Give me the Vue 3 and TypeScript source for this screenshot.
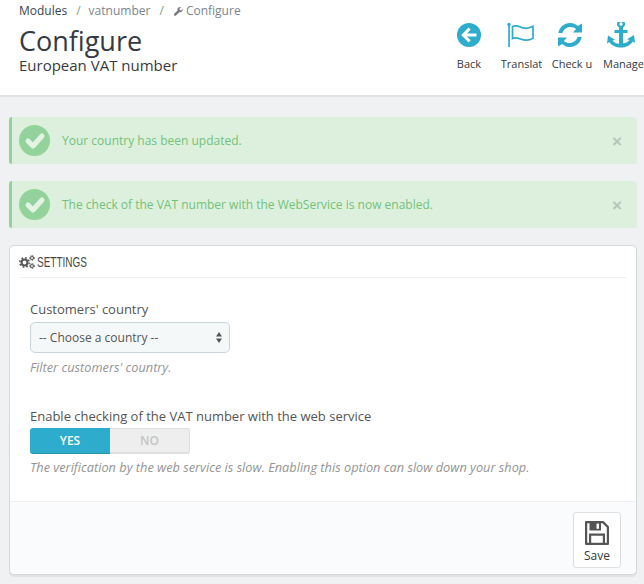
<script setup lang="ts">
const alerts: string[] = [
  'Your country has been updated.',
  'The check of the VAT number with the WebService is now enabled.',
]
</script>

<template>
  <div class="page">
    <header class="head">
      <div class="head-left">
        <nav class="crumbs">
          <span class="crumb-first">Modules</span>
          <span class="sep">/</span>
          <span>vatnumber</span>
          <span class="sep">/</span>
          <span class="crumb-last">
            <svg class="wrench" viewBox="0 0 16 16" width="9" height="9">
              <path fill="#777" d="M15.6 3.6 12.9 6.3 10.2 5.8 9.7 3.1 12.4.4C10.7-.2 8.7.2 7.4 1.5 6.1 2.8 5.8 4.7 6.4 6.3L.6 12.1C-.2 12.9-.2 14.2.6 15c.8.8 2.1.8 2.9 0L9.3 9.2c1.6.6 3.5.3 4.8-1 1.3-1.3 1.7-3 1.5-4.6Z" />
            </svg>
            Configure
          </span>
        </nav>
        <h1 class="title">Configure</h1>
        <div class="subtitle">European VAT number</div>
      </div>
      <div class="tools">
        <div class="tool tool-back">
          <svg viewBox="0 0 24 24" width="24" height="24">
            <circle cx="12" cy="12" r="12" fill="#2eacce" />
            <path fill="#fff" d="M11.6 4.6 4.2 12l7.4 7.4 2.1-2.1-3.8-3.800h9.600v-3h-9.600l3.800-3.800Z" />
          </svg>
          <span class="tool-label">Back</span>
        </div>
        <div class="tool tool-flag">
          <svg viewBox="0 0 28 26" width="28" height="26">
            <circle cx="2" cy="2.500" r="1.700" fill="#2eacce" />
            <rect x="1.200" y="3" width="1.700" height="22" fill="#2eacce" />
            <path fill="none" stroke="#2eacce" stroke-width="1.700" d="M5.500 4.500c3-1.400 5.500-.6 8 .6 3.500 1.600 8 1.600 12.500-.8v11.900c-3.500 2.200-8.500 2.400-12.500.8-3.500-1.400-5.500-1.800-8-.6Z" />
          </svg>
          <span class="tool-label">Translat</span>
        </div>
        <div class="tool tool-check">
          <svg viewBox="0 0 24 24" width="24" height="24">
            <path fill="#2eacce" d="M12 0c3.100 0 5.700 1.100 7.800 3.100L24 .5v9h-9l3.100-3.400C16.700 4.800 14.500 4 12.500 4 8.700 4 5.500 6.500 4.500 10H.3C1.400 4.300 6.200 0 12 0Z" />
            <path fill="#2eacce" d="M12 24c-3.100 0-5.700-1.100-7.800-3.100L0 23.500v-9h9l-3.100 3.400C7.300 19.200 9.500 20 11.500 20c3.800 0 7-2.500 8-6h4.200C22.600 19.700 17.800 24 12 24Z" />
          </svg>
          <span class="tool-label">Check u</span>
        </div>
        <div class="tool tool-anchor">
          <svg viewBox="0 0 28 28" width="28" height="28">
            <path fill="#2eacce" fill-rule="evenodd" d="M14 .5a4 4 0 0 1 2 7.500v2.500h4.500v3H16v10.300c3-.3 5.300-1.500 6.500-3.300l-2.500-.8 7-4.200 1 8-2.200-1.600C23.500 25.500 19 28 14 28S4.500 25.500 2.200 22.400L0 24l1-8 7 4.200-2.500.8c1.200 1.800 3.500 3 6.500 3.300V13.500H7.500v-3H12V8A4 4 0 0 1 14 .5Zm0 2.300a1.700 1.700 0 1 0 0 3.400 1.700 1.700 0 0 0 0-3.400Z" />
          </svg>
          <span class="tool-label">Manage</span>
        </div>
      </div>
    </header>

    <main class="content">
      <div v-for="a in alerts" :key="a" class="alert">
        <svg class="alert-icon" viewBox="0 0 31 31" width="31" height="31">
          <circle cx="15.500" cy="15.500" r="15.500" fill="#93d29a" />
          <path fill="none" stroke="#e3f3e4" stroke-width="5" stroke-linecap="round" stroke-linejoin="round" d="M9 16l5 5 9-10" />
        </svg>
        <span class="alert-text">{{ a }}</span>
        <span class="alert-close">×</span>
      </div>

      <section class="panel">
        <div class="panel-head">
          <svg viewBox="0 0 16 14" width="16" height="14">
            <g fill="none" stroke="#555">
              <circle cx="5.500" cy="7.500" r="2.900" stroke-width="2" />
              <circle cx="5.500" cy="7.500" r="4.700" stroke-width="1.500" stroke-dasharray="1.800 1.890" />
              <circle cx="13" cy="3" r="1.500" stroke-width="1" />
              <circle cx="13" cy="3" r="2.400" stroke-width="1" stroke-dasharray="1.200 .9" />
              <circle cx="13" cy="11" r="1.500" stroke-width="1" />
              <circle cx="13" cy="11" r="2.400" stroke-width="1" stroke-dasharray="1.200 .9" />
            </g>
          </svg>
          <span class="panel-title">SETTINGS</span>
        </div>

        <div class="panel-body">
          <div class="field field-country">
            <label class="label">Customers' country</label>
            <div class="select">
              <span>-- Choose a country --</span>
              <svg viewBox="0 0 6 11" width="6" height="11">
                <path fill="#555" d="M3 0l3 4.400H0ZM3 11l3-4.400H0Z" />
              </svg>
            </div>
            <p class="help">Filter customers' country.</p>
          </div>

          <div class="field">
            <label class="label">Enable checking of the VAT number with the web service</label>
            <div class="switch">
              <span class="sw-yes">YES</span>
              <span class="sw-no">NO</span>
            </div>
            <p class="help help-tight">The verification by the web service is slow. Enabling this option can slow down your shop.</p>
          </div>
        </div>

        <div class="panel-foot">
          <button class="save" type="button">
            <svg viewBox="0 0 24 24" width="24" height="24">
              <path fill="none" stroke="#555" stroke-width="2.200" stroke-linejoin="round" d="M1.100 1.100H18L22.900 6V22.900H1.100Z" />
              <path fill="#555" fill-rule="evenodd" d="M4.500 1h11.500v8.500H4.500ZM11.500 2.500v5.200h2.500V2.500Z" />
              <path fill="none" stroke="#555" stroke-width="2.200" d="M5.100 23V13.600H18.900V23" />
            </svg>
            <span>Save</span>
          </button>
        </div>
      </section>
    </main>
  </div>
</template>

<style>
html, body { margin: 0; padding: 0; background: #eff1f3; }
</style>

<style scoped>
.page {
  width: 644px;
  height: 584px;
  overflow: hidden;
  background: #eff1f3;
  font-family: "Open Sans", "Noto Sans", sans-serif;
  font-size: 12px;
  color: #555;
}
.head {
  box-sizing: border-box;
  height: 97px;
  background: #fff;
  border-bottom: 2px solid #e0e1e3;
  display: flex;
  justify-content: space-between;
}
.head-left { padding: 2px 0 0 19px; }
.crumbs {
  display: flex;
  align-items: center;
  height: 16px;
  font-size: 12px;
  color: #7b8691;
}
.crumb-first { color: #3c4650; }
.sep { margin: 0 8px 0 9px; color: #7c9a8a; }
.crumb-last { margin-left: 2px; }
.wrench { margin-right: 0; vertical-align: -1px; }
.title {
  margin: 7px 0 0;
  font-size: 27px;
  line-height: 32px;
  font-weight: 400;
  color: #363a41;
}
.subtitle {
  font-size: 15px;
  line-height: 18px;
  color: #363a41;
  margin-top: -1px;
}
.tools {
  display: flex;
  padding: 22px 0 0 0;
}
.tool {
  display: flex;
  flex-direction: column;
  align-items: center;
  overflow: hidden;
  height: 50px;
}
.tool svg { flex: none; height: 26px; }
.tool-label {
  font-size: 11px;
  line-height: 15px;
  margin-top: 8px;
  color: #363a41;
  white-space: nowrap;
}
.tool-back { width: 42px; margin-left: -1px; }
.tool-flag { width: 41px; margin-left: 11px; }
.tool-flag svg { margin-right: 1px; }
.tool-check { width: 40px; margin-left: 10px; }
.tool-check svg { margin-right: 4px; }
.tool-anchor { width: 41px; margin-left: 11px; }
.tool-anchor svg { margin-top: -3px; margin-right: 6px; height: 29px; }
.content { padding: 20px 7px 0 9px; }
.alert {
  box-sizing: border-box;
  height: 47px;
  margin-bottom: 17px;
  display: flex;
  align-items: center;
  background: #ddf0de;
  border-left: 3px solid #93d29a;
  border-radius: 3px;
  padding: 0 15px 0 7px;
  color: #72c279;
  font-size: 12px;
}
.alert-text { margin-left: 12px; flex: 1; }
.alert-close {
  margin-top: 2px;
  font-size: 17px;
  font-weight: 700;
  color: #b4c6b7;
  line-height: 18px;
  font-family: "Liberation Sans", sans-serif;
}
.panel {
  box-sizing: border-box;
  height: 330px;
  background: #fff;
  border: 1px solid #d3d8db;
  border-radius: 5px;
  box-shadow: 0 2px 0 rgba(0, 0, 0, 0.06);
  display: flex;
  flex-direction: column;
}
.panel-head {
  height: 31px;
  margin: 0 10px 0 9px;
  border-bottom: 1px solid #eeeff0;
  display: flex;
  align-items: center;
  gap: 2px;
  flex: none;
}
.panel-title {
  display: inline-block;
  font-family: "Liberation Sans", sans-serif;
  font-size: 14.500px;
  color: #4a4a4a;
  transform: scaleX(0.69);
  transform-origin: left center;
}
.panel-body { flex: 1; padding: 22px 20px 0 20px; }
.label {
  display: block;
  font-size: 13px;
  line-height: 18px;
  color: #555;
}
.field-country { margin-bottom: 31px; }
.select {
  box-sizing: border-box;
  margin-top: 4px;
  width: 200px;
  height: 31px;
  background: #f5f8f9;
  border: 1px solid #c7d6db;
  border-radius: 5px;
  padding: 0 7px 0 8px;
  display: flex;
  align-items: center;
  justify-content: space-between;
  font-size: 12px;
  color: #555;
}
.help {
  margin: 6px 0 0;
  font-size: 12.750px;
  line-height: 17px;
  font-style: italic;
  color: #959595;
}
.help-tight { margin-top: 5px; }
.switch {
  margin-top: 3px;
  width: 160px;
  height: 26px;
  display: flex;
  font-size: 12px;
  font-weight: 600;
}
.sw-yes, .sw-no {
  width: 80px;
  display: flex;
  align-items: center;
  justify-content: center;
  box-sizing: border-box;
}
.sw-yes {
  background: #2eacce;
  color: #fff;
  border-radius: 3px 0 0 3px;
  border-bottom: 1px solid #2895b3;
}
.sw-no {
  background: #eeeeee;
  color: #c4c4c4;
  border: 1px solid #dedede;
  border-left: none;
  border-bottom-width: 2px;
  border-radius: 0 3px 3px 0;
}
.panel-foot {
  height: 73px;
  flex: none;
  box-sizing: border-box;
  background: #fafbfc;
  border-top: 1px solid #eeeff0;
  border-radius: 0 0 5px 5px;
  padding: 10px 15px 0 0;
  display: flex;
  justify-content: flex-end;
  align-items: flex-start;
}
.save {
  box-sizing: border-box;
  width: 48px;
  height: 56px;
  padding: 8px 0 0;
  background: #fff;
  border: 1px solid #dcdfe1;
  border-radius: 3px;
  display: flex;
  flex-direction: column;
  align-items: center;
  font-family: inherit;
  font-size: 12px;
  color: #363a41;
  line-height: 16px;
}
.save svg { margin-bottom: 3px; }
</style>
